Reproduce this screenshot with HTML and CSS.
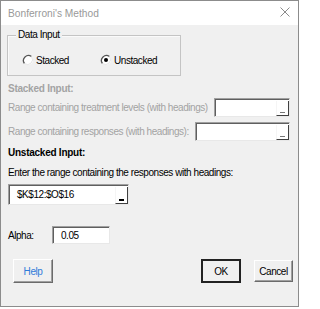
FILE: index.html
```html
<!DOCTYPE html>
<html>
<head>
<meta charset="utf-8">
<link rel="stylesheet" href="styles.css">
</head>
<body>
<div class="window">
  <div class="titlebar">
    <span class="title">Bonferroni's Method</span>
    <svg class="close" width="10" height="10" viewBox="0 0 10 10"><path d="M0.5 0.5 L9.5 9.5 M9.5 0.5 L0.5 9.5" stroke="#8a8a8a" stroke-width="1" fill="none"/></svg>
  </div>
  <div class="content">
    <div class="group">
      <span class="legend">Data Input</span>
      <div class="radios">
        <label class="radio r1">
          <svg class="rbtn" width="12" height="12" viewBox="0 0 12 12"><circle cx="6" cy="6" r="5" fill="#fff"/><path d="M2.5 9.5 A5 5 0 0 1 9.5 2.5" stroke="#555" stroke-width="1.3" fill="none"/><path d="M9.5 2.5 A5 5 0 0 1 2.5 9.5" stroke="#e6e6e6" stroke-width="1" fill="none"/></svg>
          <span>Stacked</span>
        </label>
        <label class="radio">
          <svg class="rbtn" width="12" height="12" viewBox="0 0 12 12"><circle cx="6" cy="6" r="5" fill="#fff"/><path d="M2.5 9.5 A5 5 0 0 1 9.5 2.5" stroke="#555" stroke-width="1.3" fill="none"/><path d="M9.5 2.5 A5 5 0 0 1 2.5 9.5" stroke="#e6e6e6" stroke-width="1" fill="none"/><circle cx="6" cy="6" r="2" fill="#000"/></svg>
          <span>Unstacked</span>
        </label>
      </div>
    </div>

    <div class="heading disabled h-stacked">Stacked Input:</div>
    <div class="row row1">
      <span class="disabled">Range containing treatment levels (with headings)</span>
      <div class="refedit w1"><span class="val"></span><span class="rbtnbox"><span class="dash"></span></span></div>
    </div>
    <div class="row row2">
      <span class="disabled">Range containing responses (with headings):</span>
      <div class="refedit w2"><span class="val"></span><span class="rbtnbox"><span class="dash"></span></span></div>
    </div>

    <div class="heading h-unstacked">Unstacked Input:</div>
    <div class="text enter">Enter the range containing the responses with headings:</div>
    <div class="refedit main"><span class="val">$K$12:$O$16</span><span class="rbtnbox"><span class="dash dark"></span></span></div>

    <div class="alpha-row">
      <span class="alpha-label">Alpha:</span>
      <div class="textbox alpha"><span class="val">0.05</span></div>
    </div>

    <div class="buttons">
      <div class="btn help">Help</div>
      <div class="spacer"></div>
      <div class="btn ok">OK</div>
      <div class="btn cancel">Cancel</div>
    </div>
  </div>
</div>
</body>
</html>
```

FILE: styles.css
```css
html, body {
  margin: 0;
  padding: 0;
  background: #ffffff;
}

.window {
  width: 299px;
  height: 307px;
  box-sizing: border-box;
  border: 1px solid #8c8c8c;
  background: #f0f0f0;
  font-family: "Liberation Sans", Arial, sans-serif;
  font-size: 10px;
  letter-spacing: -0.45px;
  color: #000;
  display: flex;
  flex-direction: column;
}

.titlebar {
  height: 24px;
  background: #ffffff;
  display: flex;
  align-items: center;
  padding: 0 7px 0 7px;
}

.title {
  color: #999999;
  font-size: 10.2px;
  letter-spacing: 0;
  flex: 1;
  padding-top: 1px;
}

.close {
  display: block;
  margin-right: 1px;
  margin-top: -2px;
}

.content {
  flex: 1;
  padding: 0 8px 0 7px;
  display: flex;
  flex-direction: column;
}

.group {
  position: relative;
  margin-top: 10px;
  margin-left: -1px;
  width: 174px;
  height: 41px;
  box-sizing: border-box;
  border: 1px solid #c4c4c4;
  box-shadow: inset 1px 1px 0 #fafafa;
}

.legend {
  position: absolute;
  top: -7px;
  left: 8px;
  padding: 0 2px;
  background: #f0f0f0;
  line-height: 12px;
}

.radios {
  display: flex;
  align-items: center;
  height: 14px;
  margin-top: 17px;
  padding-left: 14px;
}

.radio {
  display: flex;
  align-items: center;
  gap: 2px;
}

.r1 {
  width: 78px;
}

.rbtn {
  display: block;
}

.heading {
  font-weight: bold;
  letter-spacing: -0.25px;
  line-height: 14px;
  height: 14px;
}

.h-stacked {
  margin-top: 6px;
}

.h-unstacked {
  margin-top: 5px;
}

.disabled {
  color: #a3a3a3;
}

.row {
  display: flex;
  align-items: center;
  justify-content: space-between;
}

.row1 {
  margin-top: 2px;
  height: 19px;
}

.row2 {
  margin-top: 5px;
  height: 19px;
}

.refedit, .textbox {
  box-sizing: border-box;
  background: #ffffff;
  border: 1px solid;
  border-color: #a0a0a0 #e8e8e8 #e8e8e8 #a0a0a0;
  box-shadow: inset 1px 1px 0 #5f5f5f;
  display: flex;
  align-items: stretch;
}

.w1 {
  width: 76px;
  height: 19px;
}

.w2 {
  width: 95px;
  height: 19px;
}

.val {
  flex: 1;
  display: flex;
  align-items: center;
  padding-left: 8px;
}

.rbtnbox {
  width: 13px;
  box-sizing: border-box;
  margin: 2px 0 0 0;
  border-left: 1px solid #f5f5f5;
  border-right: 1px solid #404040;
  border-bottom: 1px solid #404040;
  background: #ffffff;
  position: relative;
}

.dash {
  position: absolute;
  left: 3px;
  bottom: 2px;
  width: 5px;
  height: 1px;
  background: #777;
}

.dash.dark {
  background: #000;
  height: 2px;
}

.text {
  line-height: 14px;
  height: 14px;
}

.enter {
  margin-top: 6px;
}

.main {
  margin-top: 4px;
  width: 121px;
  height: 21px;
}

.alpha-row {
  display: flex;
  align-items: center;
  margin-top: 21px;
  height: 18px;
}

.alpha-label {
  width: 44px;
}

.alpha {
  width: 58px;
  height: 18px;
}

.buttons {
  display: flex;
  align-items: center;
  margin-top: 15px;
  height: 24px;
}

.btn {
  box-sizing: border-box;
  display: flex;
  align-items: center;
  justify-content: center;
  background: #f0f0f0;
  border: 1px solid;
  border-color: #ffffff #6b6b6b #6b6b6b #ffffff;
  box-shadow: inset -1px -1px 0 #a0a0a0;
}

.help {
  width: 40px;
  height: 24px;
  margin-left: 5px;
  color: #2f7bd9;
}

.spacer {
  flex: 1;
}

.ok {
  width: 40px;
  height: 24px;
  border: 2px solid #222;
  box-shadow: none;
}

.cancel {
  width: 39px;
  height: 22px;
  margin-left: 13px;
  margin-right: -3px;
}
```
